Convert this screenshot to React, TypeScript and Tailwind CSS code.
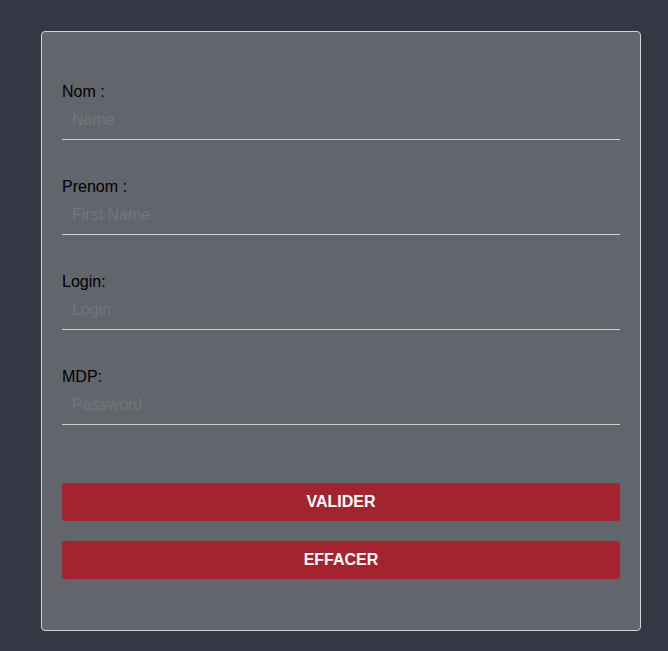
export default function App() {
  const fields = [
    { label: 'Nom :', placeholder: 'Name', type: 'text' },
    { label: 'Prenom :', placeholder: 'First Name', type: 'text' },
    { label: 'Login:', placeholder: 'Login', type: 'text' },
    { label: 'MDP:', placeholder: 'Password', type: 'password' },
  ];

  return (
    <div className="min-h-screen bg-[#363744] pt-[31px] pl-[41px] font-['Liberation_Sans',Arial,sans-serif]">
      <form className="w-[600px] h-[600px] bg-[#62656c] border border-[#d2d2d2] rounded-[4px] px-5 pt-[51px]">
        {fields.map((f) => (
          <div key={f.label} className="mb-[38px]">
            <label className="block text-base leading-[18px] text-black">{f.label}</label>
            <input
              type={f.type}
              placeholder={f.placeholder}
              className="block w-full h-[39px] bg-transparent border-b border-[#cfcfcf] px-[10px] text-base text-black placeholder:text-[#74767a] outline-none"
            />
          </div>
        ))}
        <div className="pt-5 flex flex-col gap-5">
          <button
            type="submit"
            className="h-[38px] w-full rounded-[3px] bg-[#a3242f] text-white font-bold text-base"
          >
            VALIDER
          </button>
          <button
            type="reset"
            className="h-[38px] w-full rounded-[3px] bg-[#a3242f] text-white font-bold text-base"
          >
            EFFACER
          </button>
        </div>
      </form>
    </div>
  );
}
